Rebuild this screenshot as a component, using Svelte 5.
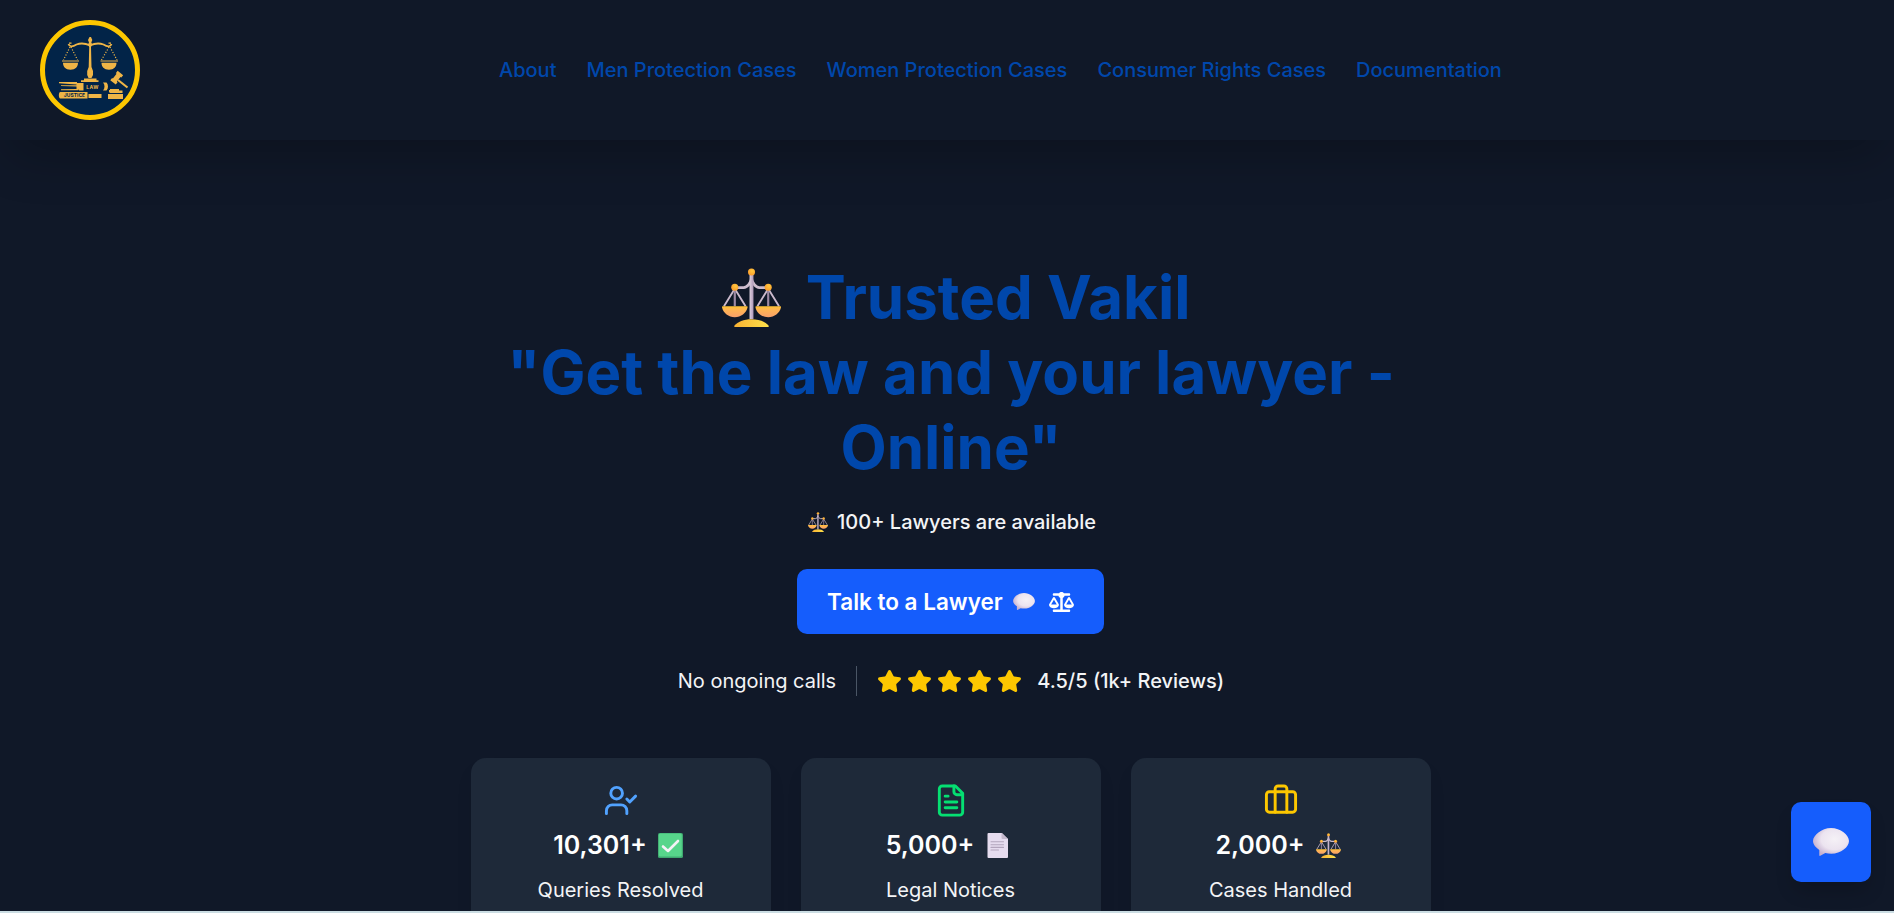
<script>
  const links = ['About', 'Men Protection Cases', 'Women Protection Cases', 'Consumer Rights Cases', 'Documentation'];
  const stars = [1, 2, 3, 4, 5];
  const stats = [
    { value: '10,301+', label: 'Queries Resolved', icon: 'user', emoji: 'check' },
    { value: '5,000+', label: 'Legal Notices', icon: 'file', emoji: 'page' },
    { value: '2,000+', label: 'Cases Handled', icon: 'case', emoji: 'scale' }
  ];
</script>

<svg class="defs" width="0" height="0" aria-hidden="true">
  <defs>
    <linearGradient id="pan" x1="0" y1="0" x2="0" y2="1">
      <stop offset="0" stop-color="#ffc233" /><stop offset="0.3" stop-color="#ffb552" /><stop offset="1" stop-color="#f9a06a" />
    </linearGradient>
    <linearGradient id="base" x1="0" y1="0" x2="1" y2="0">
      <stop offset="0" stop-color="#f9b233" /><stop offset="1" stop-color="#ffe14a" />
    </linearGradient>
    <linearGradient id="rod" x1="0" y1="0" x2="1" y2="0">
      <stop offset="0" stop-color="#ded0de" /><stop offset="1" stop-color="#ae98b8" />
    </linearGradient>
    <radialGradient id="ball" cx="0.6" cy="0.35" r="0.7">
      <stop offset="0" stop-color="#ffc83d" /><stop offset="1" stop-color="#fb9a2c" />
    </radialGradient>
    <radialGradient id="bubble" cx="0.6" cy="0.4" r="0.62">
      <stop offset="0" stop-color="#f5f1f6" /><stop offset="0.6" stop-color="#ece4f0" /><stop offset="1" stop-color="#c5b1d0" />
    </radialGradient>
    <symbol id="scale" viewBox="0 0 60 60">
      <g fill="none" stroke="#cbb9cc" stroke-width="1.9" stroke-linejoin="round">
        <path d="M2 39 13 21 24 39M36 39 47 21 58 39" />
        <path d="M13 20V39M47 20V39" stroke="#9d89a4" stroke-width="2.2" />
        <path d="M14 20h8c4 0 7-5 8-9 1 4 4 9 8 9h8" stroke="#cdbccd" stroke-width="2.8" />
      </g>
      <path d="M28 6h4v46h-4z" fill="url(#rod)" />
      <circle cx="30" cy="4" r="3.6" fill="url(#ball)" />
      <circle cx="13" cy="19.5" r="3.6" fill="url(#ball)" />
      <circle cx="47" cy="19.5" r="3.6" fill="url(#ball)" />
      <path d="M0.5 39h25c.6 0 .6.8.4 1.5C24.500 46 19.500 50 13 50S1.500 46 .1 40.500C0 39.800 0 39 .5 39z" fill="url(#pan)" />
      <path d="M34.500 39h25c.6 0 .6.8.4 1.500C58.500 46 53.500 50 47 50s-11.500-4-12.900-9.500C34 39.800 34 39 34.500 39z" fill="url(#pan)" />
      <path d="M13 60c-.6 0-.8-.8-.3-1.500C16 54.500 22 52 30 52s14 2.500 17.300 6.500c.5.7.3 1.500-.3 1.500z" fill="url(#base)" />
    </symbol>
    <symbol id="speech" viewBox="0 0 36 28">
      <path d="M18 0C8.500 0 0 7.500 0 13c0 3.500 3 6.500 6.300 9v5.300c0 .6.5.8 1 .5l5-2.800c2 .5 4 .7 6 .7C28 25.700 36 19 36 13S27.500 0 18 0z" fill="url(#bubble)" />
    </symbol>
    <symbol id="check" viewBox="0 0 25 25">
      <rect width="25" height="25" rx="1.6" fill="#3fa870" />
      <rect x="0.8" y="0.6" width="23" height="23" rx="1.5" fill="#57d58b" />
      <path d="M5 13.500 10 18 20 8" fill="none" stroke="#f5f2f7" stroke-width="2.6" stroke-linecap="round" stroke-linejoin="round" />
    </symbol>
    <symbol id="page" viewBox="0 0 25 25">
      <path d="M3.500 0H17l6 6v18a1 1 0 0 1-1 1H3.500a1 1 0 0 1-1-1V1a1 1 0 0 1 1-1z" fill="#e6dcef" />
      <path d="M16.500 0v5a1 1 0 0 0 1 1H23z" fill="#c4b8cc" />
      <path d="M6 8.800h12.500M6 11.700h12.500M6 14.400h12.500M6 17h7.500" stroke="#b3a5bd" stroke-width="1.1" stroke-linecap="round" />
    </symbol>
  </defs>
</svg>

<div class="page">
  <header>
    <div class="logo">
      <svg viewBox="0 0 92 92" width="92" height="92" fill="#efb546" stroke="none">
        <path d="M45.500 13h1.500l1.300 3-1 2.500 1 2-1.300 2.500.5 20 1.500 4V51l-1.500 3H44.500L43.200 51v-4l1.500-4 .5-20-1.200-2.500 1-2-1-2.500z" />
        <path d="M40 54.500h12.500v1.800h2v1.800H37v-1.800h3z" />
        <g fill="none" stroke="#efb546">
          <path d="M24.500 20c1 3 4 3 8 .5 4-1.500 8-1.500 13.500.8 5.500-2.300 9.500-2.300 13.500-.8 4 2.500 7 2.500 8-.5" stroke-width="1.800" />
          <path d="M25 19.200h2.500M64.500 19.200H67" stroke-width="1.300" />
          <path d="M26 23 19.500 36M27 23l6.500 13M65 23l-7.500 13M66 23l7 13" stroke-width="1.200" stroke-dasharray="1.200 1.600" />
          <path d="M18 37h17M56.500 37h17.500" stroke-width="1" />
        </g>
        <path d="M19 38.800h15c0 4-2.500 7-7.500 7s-7.500-3-7.500-7zM57.500 38.800h15c0 4-2.500 7-7.500 7s-7.500-3-7.500-7z" />
        <path d="M15 58h18v1h6.500v7.500H35l-1-1.200v1H17v-1l15.500-.4v-2.400L17 62v-.8h15.500v-.7L15 59.300zM59 58.500h3.500c2 2 2 6 0 8H59c2-2 2-6 0-8z" />
        <path d="M16 68h27.500v6.500H16c-1.500-1-1.500-5.500 0-6.500zM44.500 70h13v4h-13z" />
        <path d="M66 65h9v1.500h3.500V69H66v-.500h-1V66h1zM64 70h15v5H64z" />
        <g transform="translate(72.700 53.700) rotate(-52)">
          <path d="M-6-3.500h3v1h6v-1h3v7H3v-1h-6v1h-3z" />
        </g>
        <path d="M74 56 83.500 63.500" stroke="#efb546" stroke-width="2.200" />
        <text x="48.500" y="65" font-size="5" text-anchor="middle" letter-spacing=".4">LAW</text>
        <text x="30.500" y="73.300" font-size="5" text-anchor="middle" class="dark">JUSTICE</text>
      </svg>
    </div>
    <nav>
      {#each links as link}<a href="#top">{link}</a>{/each}
    </nav>
  </header>

  <main>
    <h1>
      <svg class="title-emoji"><use href="#scale" /></svg> Trusted Vakil<br />
      "Get the law and your lawyer - Online"
    </h1>
    <p class="available"><svg class="small-emoji"><use href="#scale" /></svg><span>100+ Lawyers are available</span></p>
    <button class="talk">
      <span>Talk to a Lawyer</span>
      <svg class="talk-bubble"><use href="#speech" /></svg>
      <svg width="25" height="20" viewBox="0 0 640 512" fill="#fff"><path d="M384 32l128 0c17.700 0 32 14.300 32 32s-14.300 32-32 32L398.400 96c-5.200 25.800-22.900 47.100-46.400 57.300L352 448l160 0c17.700 0 32 14.300 32 32s-14.300 32-32 32l-192 0-192 0c-17.700 0-32-14.300-32-32s14.300-32 32-32l160 0 0-294.700c-23.500-10.300-41.200-31.600-46.400-57.300L128 96c-17.700 0-32-14.300-32-32s14.300-32 32-32l128 0c14.600-19.400 37.800-32 64-32s49.400 12.600 64 32zm55.600 288l144.900 0L512 195.800 439.600 320zM512 416c-62.900 0-115.200-34-126-78.900c-2.600-11 1-22.300 6.700-32.100l95.200-163.200c5-8.600 14.200-13.800 24.100-13.800s19.100 5.300 24.100 13.800l95.200 163.200c5.700 9.800 9.300 21.100 6.700 32.100C627.200 382 574.900 416 512 416zM126.800 195.800L54.400 320l144.900 0L126.800 195.800zM.9 337.100c-2.600-11 1-22.300 6.700-32.100l95.200-163.200c5-8.600 14.200-13.800 24.100-13.800s19.100 5.300 24.100 13.800l95.200 163.200c5.700 9.800 9.300 21.100 6.700 32.100C242 382 189.700 416 126.800 416S11.700 382 .9 337.100z" /></svg>
    </button>
    <div class="rating">
      <span>No ongoing calls</span>
      <i class="divider"></i>
      <div class="stars">
        {#each stars as s}
          <svg width="25" height="25" viewBox="0 0 24 24" fill="#fdc700" stroke="#fdc700" stroke-width="2" stroke-linejoin="round"><path d="M11.525 2.295a.53.53 0 0 1 .95 0l2.310 4.679a2.123 2.123 0 0 0 1.595 1.160l5.166.756a.53.53 0 0 1 .294.904l-3.736 3.638a2.123 2.123 0 0 0-.611 1.878l.882 5.140a.53.53 0 0 1-.771.560l-4.618-2.428a2.122 2.122 0 0 0-1.973 0L6.396 21.010a.53.53 0 0 1-.770-.560l.881-5.139a2.122 2.122 0 0 0-.611-1.879L2.160 9.795a.53.53 0 0 1 .294-.906l5.165-.755a2.122 2.122 0 0 0 1.597-1.160z" /></svg>
        {/each}
      </div>
      <strong>4.5/5 (1k+ Reviews)</strong>
    </div>
    <section class="cards">
      {#each stats as stat}
        <article>
          <svg class="icon {stat.icon}" viewBox="0 0 24 24" fill="none" stroke="currentColor" stroke-width="2" stroke-linecap="round" stroke-linejoin="round">
            {#if stat.icon === 'user'}
              <path d="M16 21v-2a4 4 0 0 0-4-4H6a4 4 0 0 0-4 4v2" /><circle cx="9" cy="7" r="4" /><path d="m16 11 2 2 4-4" />
            {:else if stat.icon === 'file'}
              <path d="M15 2H6a2 2 0 0 0-2 2v16a2 2 0 0 0 2 2h12a2 2 0 0 0 2-2V7Z" /><path d="M14 2v4a2 2 0 0 0 2 2h4M10 9H8M16 13H8M16 17H8" />
            {:else}
              <path d="M16 20V4a2 2 0 0 0-2-2h-4a2 2 0 0 0-2 2v16" /><rect width="20" height="14" x="2" y="6" rx="2" />
            {/if}
          </svg>
          <div class="value"><span>{stat.value}</span><svg width="25" height="25"><use href="#{stat.emoji}" /></svg></div>
          <div class="label">{stat.label}</div>
        </article>
      {/each}
    </section>
  </main>
  <div class="edge"></div>
  <button class="chat" aria-label="Chat"><svg width="36" height="28"><use href="#speech" /></svg></button>
</div>

<style>
  :global(body) { margin: 0; overflow: hidden; background: #101828; }
  .defs { position: absolute; }
  .page { position: relative; height: 913px; overflow: hidden; background: #101828; font-family: Inter, sans-serif; color: #f3f4f6; display: flex; flex-direction: column; }
  header { flex: none; height: 140px; box-sizing: border-box; padding: 0 40px; display: flex; align-items: center; box-shadow: 0 25px 50px -12px rgba(0, 0, 0, 0.25); }
  .logo { width: 100px; height: 100px; box-sizing: border-box; border: 5px solid #fdc700; border-radius: 50%; background: #022448; display: flex; align-items: center; justify-content: center; overflow: hidden; }
  .logo svg { flex: none; }
  .logo text { font-family: Inter, sans-serif; font-weight: 700; }
  .logo .dark { fill: #022448; }
  nav { display: flex; gap: 30px; margin-left: 359px; }
  nav a { color: #0047ab; text-decoration: none; font-size: 20px; line-height: 30px; font-weight: 500; white-space: nowrap; }
  main { flex: 1; min-height: 0; padding: 120px 0 0 8px; display: flex; flex-direction: column; align-items: center; overflow: hidden; }
  h1 { margin: 0; width: 960px; text-align: center; color: #0047ab; font-size: 60px; line-height: 75px; font-weight: 700; flex: none; }
  .title-emoji { width: 59px; height: 59px; margin: 0 11px 0 10px; vertical-align: -8px; }
  .available { margin: 22px 0 0 2px; height: 30px; display: flex; align-items: center; gap: 9px; font-size: 20px; line-height: 30px; font-weight: 500; }
  .small-emoji { width: 20px; height: 20px; }
  .talk { flex: none; margin: 32px 1px 0 0; width: 307px; height: 65px; padding: 0 30px; box-sizing: border-box; border: 0; border-radius: 10px; background: #155dfc; color: #fff; font: 600 22.5px/35px Inter, sans-serif; display: flex; align-items: center; white-space: nowrap; }
  .talk-bubble { width: 22px; height: 17px; margin: 0 14px 0 auto; flex: none; }
  .talk > svg { flex: none; }
  .rating { flex: none; margin-top: 32px; height: 30px; display: flex; align-items: center; font-size: 20px; line-height: 30px; }
  .divider { width: 1px; height: 30px; background: #4a5565; margin: 0 20px; }
  .stars { display: flex; gap: 5px; margin-right: 15px; }
  .rating strong { font-weight: 500; }
  .cards { flex: none; margin-top: 62px; display: grid; grid-template-columns: repeat(3, 300px); gap: 30px; }
  article { box-sizing: border-box; height: 180px; padding-top: 25px; border-radius: 15px; background: #1e2939; box-shadow: 0 12px 19px -4px rgba(0, 0, 0, 0.1); display: flex; flex-direction: column; align-items: center; }
  .icon { width: 36px; height: 35px; margin-right: 1px; }
  .user { color: #51a2ff; }
  .file { color: #05df72; }
  .case { color: #fdc700; }
  .value { margin: 10px 6px 0 0; height: 35px; display: flex; align-items: center; gap: 11px; font-size: 25px; line-height: 35px; font-weight: 600; color: #fff; }
  .label { margin: 12px 1px 0 0; font-size: 20px; line-height: 30px; }
  .edge { position: absolute; left: 0; right: 0; bottom: 0; height: 2px; background: #cbdde3; }
  .chat { position: absolute; right: 23px; bottom: 31px; width: 80px; height: 80px; padding: 0; border: 0; border-radius: 10px; background: #155dfc; display: flex; align-items: center; justify-content: center; box-shadow: 0 12px 19px -4px rgba(0, 0, 0, 0.2); }
</style>
